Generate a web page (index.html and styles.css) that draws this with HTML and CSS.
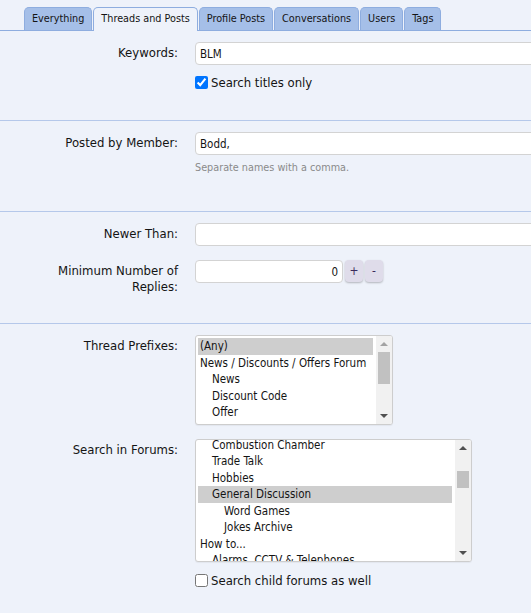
FILE: index.html
```html
<!DOCTYPE html>
<html lang="en">
<head>
    <meta charset="UTF-8">
    <meta name="viewport" content="width=device-width, initial-scale=1.0">
    <title>Search Threads and Posts</title>
    <link rel="stylesheet" href="styles.css">
</head>
<body>
    <!-- search type tabs -->
    <div class="tabs">
        <a class="tab" href="#">Everything</a>
        <a class="tab is-active" href="#">Threads and Posts</a>
        <a class="tab" href="#">Profile Posts</a>
        <a class="tab" href="#">Conversations</a>
        <a class="tab" href="#">Users</a>
        <a class="tab" href="#">Tags</a>
    </div>

    <form class="search-form">
        <!-- keywords -->
        <div class="block block-keywords">
            <div class="row">
                <label class="row-label" for="keywords">Keywords:</label>
                <div class="row-input">
                    <input type="text" id="keywords" class="input input-wide" value="BLM">
                    <label class="check"><input type="checkbox" checked> Search titles only</label>
                </div>
            </div>
        </div>

        <!-- member -->
        <div class="block block-member">
            <div class="row">
                <label class="row-label" for="member">Posted by Member:</label>
                <div class="row-input">
                    <input type="text" id="member" class="input input-wide" value="Bodd,">
                    <div class="hint">Separate names with a comma.</div>
                </div>
            </div>
        </div>

        <!-- dates and replies -->
        <div class="block block-dates">
            <div class="row">
                <label class="row-label" for="newer">Newer Than:</label>
                <div class="row-input">
                    <input type="text" id="newer" class="input input-wide">
                </div>
            </div>
            <div class="row">
                <label class="row-label" for="replies">Minimum Number of Replies:</label>
                <div class="row-input number-box">
                    <input type="text" id="replies" class="input input-number" value="0">
                    <button type="button" class="spin">+</button>
                    <button type="button" class="spin">-</button>
                </div>
            </div>
        </div>

        <!-- prefixes and forums -->
        <div class="block">
            <div class="row">
                <label class="row-label">Thread Prefixes:</label>
                <div class="row-input">
                    <div class="listbox listbox-prefix">
                        <div class="listbox-items">
                            <div class="item is-selected">(Any)</div>
                            <div class="item">News / Discounts / Offers Forum</div>
                            <div class="item depth-1">News</div>
                            <div class="item depth-1">Discount Code</div>
                            <div class="item depth-1">Offer</div>
                        </div>
                        <div class="scrollbar">
                            <span class="arrow arrow-up is-disabled"></span>
                            <div class="track"><span class="thumb thumb-prefix"></span></div>
                            <span class="arrow arrow-down"></span>
                        </div>
                    </div>
                </div>
            </div>
            <div class="row">
                <label class="row-label">Search in Forums:</label>
                <div class="row-input">
                    <div class="listbox listbox-forums">
                        <div class="listbox-items">
                            <div class="scrolled">
                                <div class="item depth-1">Combustion Chamber</div>
                                <div class="item depth-1">Trade Talk</div>
                                <div class="item depth-1">Hobbies</div>
                                <div class="item depth-1 is-selected">General Discussion</div>
                                <div class="item depth-2">Word Games</div>
                                <div class="item depth-2">Jokes Archive</div>
                                <div class="item">How to...</div>
                                <div class="item depth-1">Alarms, CCTV &amp; Telephones</div>
                            </div>
                        </div>
                        <div class="scrollbar">
                            <span class="arrow arrow-up"></span>
                            <div class="track"><span class="thumb thumb-forums"></span></div>
                            <span class="arrow arrow-down"></span>
                        </div>
                    </div>
                    <label class="check check-child"><input type="checkbox"> Search child forums as well</label>
                </div>
            </div>
        </div>
    </form>
</body>
</html>
```

FILE: styles.css
```css
/* search page */
body {
    margin: 0;
    background-color: #eef2fa;
    color: #141414;
    font-family: "DejaVu Sans Condensed", "Liberation Sans", sans-serif;
    font-size: 13px;
    overflow-x: hidden;
}

/* tabs */
.tabs {
    display: flex;
    align-items: flex-end;
    gap: 1px;
    padding: 7px 0 0 24px;
    border-bottom: 1px solid #8eaddf;
}

.tab {
    box-sizing: border-box;
    height: 23px;
    line-height: 21px;
    padding: 0 7px;
    font-size: 10.75px;
    color: #141414;
    text-decoration: none;
    background-color: #a5bfe8;
    border: 1px solid #8eaddf;
    border-bottom: none;
    border-radius: 5px 5px 0 0;
}

.tab.is-active {
    height: 24px;
    margin-bottom: -1px;
    background-color: #eef2fa;
}

/* form blocks */
.block {
    padding: 11px 0 30px;
    border-top: 1px solid #b5c8ea;
}

.block:first-child {
    border-top: none;
}

.block-keywords {
    padding-bottom: 29px;
}

.block-member {
    padding-bottom: 36px;
}

.block-dates {
    padding-bottom: 28px;
}

.row {
    display: grid;
    grid-template-columns: 178px 1fr;
    column-gap: 17px;
}

.row + .row {
    margin-top: 14px;
}

.row-label {
    padding: 3px 0 0 50px;
    line-height: 16px;
    text-align: right;
}

.row-input {
    min-width: 0;
}

.input {
    box-sizing: border-box;
    height: 23px;
    padding: 0 4px;
    font-family: inherit;
    font-size: 11.5px;
    color: #141414;
    background-color: #fff;
    border: 1px solid #d3d3d3;
    border-radius: 4px;
    outline: none;
}

.input-wide {
    display: block;
    width: 420px;
}

.check {
    display: flex;
    align-items: center;
    margin-top: 9px;
    line-height: 17px;
}

.check input {
    width: 13px;
    height: 13px;
    margin: 0 3px 0 0;
}

.check-child {
    margin-top: 10px;
}

.hint {
    margin-top: 6px;
    font-size: 10.75px;
    line-height: 14px;
    color: #8a8a8a;
}

/* number with spin buttons */
.number-box {
    display: flex;
    align-items: flex-start;
}

.input-number {
    width: 148px;
    padding-right: 4px;
    text-align: right;
}

.spin {
    width: 18px;
    height: 22px;
    margin-left: 2px;
    padding: 0;
    font-family: inherit;
    font-size: 12px;
    color: #3b2b5c;
    background-color: #dfdcea;
    border: none;
    border-radius: 4px;
    box-shadow: 0 1px 2px rgba(0, 0, 0, 0.25);
}

/* list boxes */
.listbox {
    display: flex;
    box-sizing: border-box;
    background-color: #fff;
    border: 1px solid #cdcdcd;
    border-radius: 3px;
    overflow: hidden;
    box-shadow: 0 1px 1px rgba(0, 0, 0, 0.05);
}

.listbox-prefix {
    width: 198px;
    height: 90px;
}

.listbox-forums {
    width: 277px;
    height: 123px;
}

.listbox-items {
    flex: 1;
    padding: 2px 3px 0 2px;
    overflow: hidden;
    font-size: 11.5px;
}

.scrolled {
    margin-top: -5.5px;
}

.item {
    height: 16.5px;
    line-height: 16.5px;
    padding-left: 2px;
    white-space: nowrap;
}

.item.depth-1 {
    padding-left: 14px;
}

.item.depth-2 {
    padding-left: 26px;
}

.item.is-selected {
    background-color: #cecece;
}

.scrollbar {
    display: flex;
    flex-direction: column;
    width: 16px;
    background-color: #f1f1f1;
}

.arrow {
    display: flex;
    justify-content: center;
    align-items: center;
    height: 16px;
}

.arrow::before {
    content: "";
    border-left: 4px solid transparent;
    border-right: 4px solid transparent;
}

.arrow-up::before {
    border-bottom: 4px solid #505050;
}

.arrow-down::before {
    border-top: 4px solid #505050;
}

.arrow-up.is-disabled::before {
    border-bottom-color: #a3a3a3;
}

.track {
    flex: 1;
}

.thumb {
    display: block;
    width: 12px;
    margin: 0 auto;
    background-color: #c1c1c1;
}

.thumb-prefix {
    height: 32px;
}

.thumb-forums {
    height: 17px;
    margin-top: 15px;
}
```
